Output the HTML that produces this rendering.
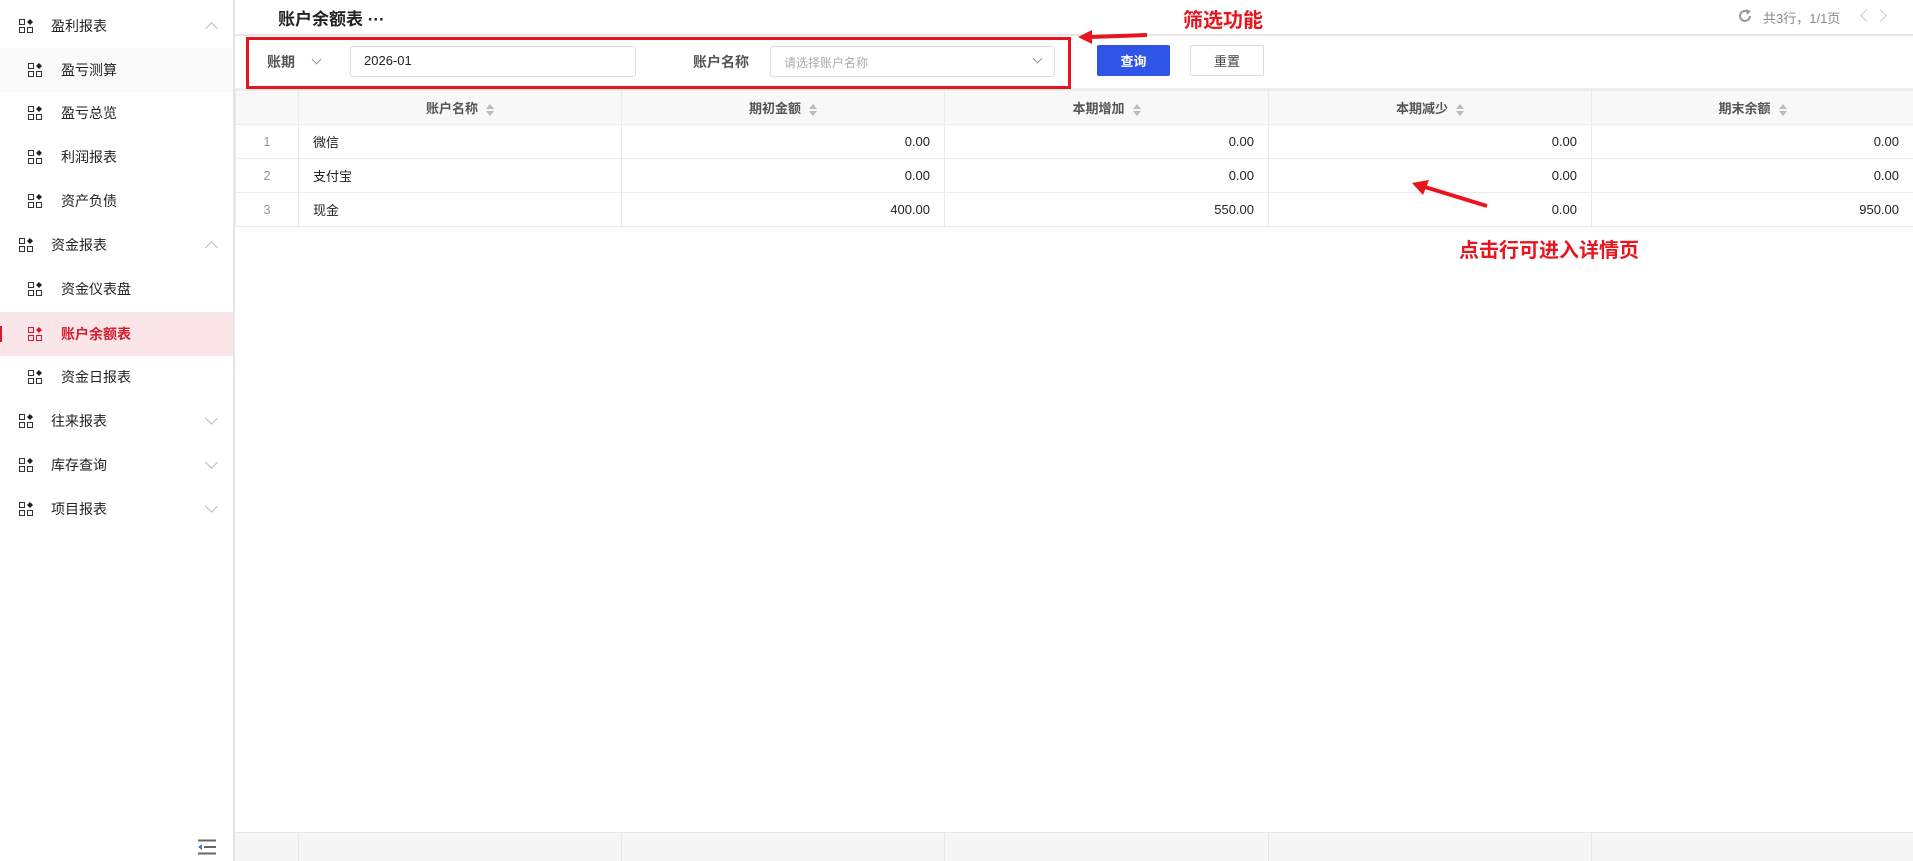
<!DOCTYPE html>
<html><head><meta charset="utf-8"><style>
*{box-sizing:border-box;margin:0;padding:0}
body{width:1913px;height:861px;overflow:hidden;background:#fff;font-family:"Liberation Sans","Noto Sans CJK SC",sans-serif;font-size:14px;color:#333;position:relative}
.abs{position:absolute}
.side{left:0;top:0;width:235px;height:861px;border-right:2px solid #e4e4e4;background:#fff}
.mi{position:absolute;left:0;width:233px;height:44px;display:flex;align-items:center;font-size:14px;color:#222}
.mi .ic{position:absolute;width:15px;height:15px}
.mi .tx{position:absolute}
.mi .ch{position:absolute;left:207px;width:9px;height:9px;border-left:1.5px solid #bbb;border-top:1.5px solid #bbb}
.up{transform:rotate(45deg);margin-top:5px}
.dn{transform:rotate(225deg);margin-top:-5px}
.hd{left:235px;top:0;right:0;height:36px;border-bottom:2px solid #e6e6e6}
.btn{position:absolute;height:31px;top:45px;display:flex;align-items:center;justify-content:center;font-size:13px;border-radius:2px}
table{position:absolute;left:235px;top:90px;width:1678px;border-collapse:collapse;table-layout:fixed}
td,th{border:1px solid #ebebeb;height:34px;font-size:13px;padding:0 14px}
th{background:#f8f8f8;font-weight:bold;color:#555;text-align:center}
td{text-align:right;color:#222}
td.n{text-align:center;color:#999}
td.l{text-align:left}
.sort{display:inline-block;vertical-align:middle;margin-left:8px;width:8px;height:12px;position:relative}
.sort:before{content:"";position:absolute;left:0;top:0;border:4px solid transparent;border-bottom:5px solid #bbb;border-top:0}
.sort:after{content:"";position:absolute;left:0;bottom:0;border:4px solid transparent;border-top:5px solid #bbb;border-bottom:0}
.red{color:#e8141e;font-weight:bold;font-size:20px}
</style></head><body>
<div class="abs side"></div>
<svg width="0" height="0" style="position:absolute"><defs>
<g id="ico"><rect x="0.5" y="0.5" width="5" height="5" fill="none" stroke="#333"/><rect x="0.5" y="8.5" width="5" height="5" fill="none" stroke="#333"/><rect x="8.5" y="8.5" width="5" height="5" fill="none" stroke="#333"/><path d="M11 0 L14 3 L11 6 L8 3Z" fill="#222"/></g>
<g id="icr"><rect x="0.5" y="0.5" width="5" height="5" fill="none" stroke="#e0142a"/><rect x="0.5" y="8.5" width="5" height="5" fill="none" stroke="#e0142a"/><rect x="8.5" y="8.5" width="5" height="5" fill="none" stroke="#e0142a"/><path d="M11 0 L14 3 L11 6 L8 3Z" fill="#e0142a"/></g>
</defs></svg>

<div class="mi" style="top:4px"><svg class="ic" style="left:19px" viewBox="0 0 15 15"><use href="#ico"/></svg><span class="tx" style="left:51px">盈利报表</span><span class="ch up"></span></div>
<div class="mi" style="top:48px;background:#fafafa"><svg class="ic" style="left:28px" viewBox="0 0 15 15"><use href="#ico"/></svg><span class="tx" style="left:61px">盈亏测算</span></div>
<div class="mi" style="top:91px"><svg class="ic" style="left:28px" viewBox="0 0 15 15"><use href="#ico"/></svg><span class="tx" style="left:61px">盈亏总览</span></div>
<div class="mi" style="top:135px"><svg class="ic" style="left:28px" viewBox="0 0 15 15"><use href="#ico"/></svg><span class="tx" style="left:61px">利润报表</span></div>
<div class="mi" style="top:179px"><svg class="ic" style="left:28px" viewBox="0 0 15 15"><use href="#ico"/></svg><span class="tx" style="left:61px">资产负债</span></div>
<div class="mi" style="top:223px"><svg class="ic" style="left:19px" viewBox="0 0 15 15"><use href="#ico"/></svg><span class="tx" style="left:51px">资金报表</span><span class="ch up"></span></div>
<div class="mi" style="top:267px"><svg class="ic" style="left:28px" viewBox="0 0 15 15"><use href="#ico"/></svg><span class="tx" style="left:61px">资金仪表盘</span></div>
<div class="mi" style="top:312px;background:#fae6e8;color:#d81b2b;font-weight:bold"><div style="position:absolute;left:0;top:14px;width:2px;height:16px;background:#d81b2b"></div><svg class="ic" style="left:28px" viewBox="0 0 15 15"><use href="#icr"/></svg><span class="tx" style="left:61px">账户余额表</span></div>
<div class="mi" style="top:355px"><svg class="ic" style="left:28px" viewBox="0 0 15 15"><use href="#ico"/></svg><span class="tx" style="left:61px">资金日报表</span></div>
<div class="mi" style="top:399px"><svg class="ic" style="left:19px" viewBox="0 0 15 15"><use href="#ico"/></svg><span class="tx" style="left:51px">往来报表</span><span class="ch dn"></span></div>
<div class="mi" style="top:443px"><svg class="ic" style="left:19px" viewBox="0 0 15 15"><use href="#ico"/></svg><span class="tx" style="left:51px">库存查询</span><span class="ch dn"></span></div>
<div class="mi" style="top:487px"><svg class="ic" style="left:19px" viewBox="0 0 15 15"><use href="#ico"/></svg><span class="tx" style="left:51px">项目报表</span><span class="ch dn"></span></div>
<svg class="abs" style="left:197px;top:839px" width="20" height="16" viewBox="0 0 20 16"><path d="M1 1.5H19M7 8H19M1 14.5H19" stroke="#666" stroke-width="2"/><path d="M1 8L5 5V11Z" fill="#4a7bd0"/></svg>

<div class="abs hd"></div>
<div class="abs" style="left:278px;top:5px;font-size:17px;font-weight:bold;color:#222">账户余额表 ···</div>
<svg class="abs" style="left:1737px;top:8px" width="16" height="16" viewBox="0 0 16 16"><path d="M13 8A5 5 0 1 1 11 4" fill="none" stroke="#999" stroke-width="2"/><path d="M9 1L14 3L10 7Z" fill="#999"/></svg>
<div class="abs" style="left:1763px;top:8px;font-size:13px;color:#888">共3行，1/1页</div>
<div class="abs" style="left:1862px;top:11px;width:9px;height:9px;border-left:1.3px solid #ccc;border-bottom:1.3px solid #ccc;transform:rotate(45deg)"></div>
<div class="abs" style="left:1876px;top:11px;width:9px;height:9px;border-right:1.3px solid #ccc;border-top:1.3px solid #ccc;transform:rotate(45deg)"></div>

<div class="abs red" style="left:1183px;top:4px">筛选功能</div>
<svg class="abs" style="left:1070px;top:25px" width="90" height="22"><path d="M1147 10L1090 12" transform="translate(-1070,0)" stroke="#e8141e" stroke-width="4"/><path d="M8 12L22 5L22 19Z" fill="#e8141e"/></svg>

<div class="abs" style="left:235px;top:88px;right:0;height:2px;background:#eee"></div>
<div class="abs" style="left:246px;top:37px;width:825px;height:52px;border:3px solid #e8141e"></div>
<div class="abs" style="left:267px;top:52px;font-size:14px;color:#555;font-weight:bold">账期</div>
<div class="abs" style="left:313px;top:56px;width:7px;height:7px;border-right:1px solid #999;border-bottom:1px solid #999;transform:rotate(45deg)"></div>
<div class="abs" style="left:350px;top:46px;width:286px;height:31px;border:1px solid #ddd;border-radius:3px;padding:6px 13px;font-size:13px;color:#222">2026-01</div>
<div class="abs" style="left:693px;top:52px;font-size:14px;color:#555;font-weight:bold">账户名称</div>
<div class="abs" style="left:770px;top:46px;width:285px;height:31px;border:1px solid #ddd;border-radius:3px;padding:7px 13px;font-size:12px;color:#aaa">请选择账户名称</div>
<div class="abs" style="left:1034px;top:55px;width:7px;height:7px;border-right:1px solid #999;border-bottom:1px solid #999;transform:rotate(45deg)"></div>
<div class="btn" style="left:1097px;width:73px;background:#2f55e8;color:#fff;font-weight:bold">查询</div>
<div class="btn" style="left:1190px;width:74px;border:1px solid #ddd;color:#444">重置</div>

<table>
<colgroup><col style="width:63px"><col style="width:323px"><col style="width:323px"><col style="width:324px"><col style="width:323px"><col style="width:322px"></colgroup>
<tr><th></th><th>账户名称<span class="sort"></span></th><th>期初金额<span class="sort"></span></th><th>本期增加<span class="sort"></span></th><th>本期减少<span class="sort"></span></th><th>期末余额<span class="sort"></span></th></tr>
<tr><td class="n">1</td><td class="l">微信</td><td>0.00</td><td>0.00</td><td>0.00</td><td>0.00</td></tr>
<tr><td class="n">2</td><td class="l">支付宝</td><td>0.00</td><td>0.00</td><td>0.00</td><td>0.00</td></tr>
<tr><td class="n">3</td><td class="l">现金</td><td>400.00</td><td>550.00</td><td>0.00</td><td>950.00</td></tr>
</table>

<svg class="abs" style="left:1405px;top:175px" width="90" height="40"><path d="M82 31L20 12" stroke="#e8141e" stroke-width="4"/><path d="M7 8L24 5L18 20Z" fill="#e8141e"/></svg>
<div class="abs red" style="left:1459px;top:234px">点击行可进入详情页</div>

<div class="abs" style="left:235px;top:832px;width:1678px;height:29px;background:#f5f5f5;border-top:1px solid #e8e8e8"></div>
<div class="abs" style="left:298px;top:832px;width:1px;height:29px;background:#e6e6e6"></div>
<div class="abs" style="left:621px;top:832px;width:1px;height:29px;background:#e6e6e6"></div>
<div class="abs" style="left:944px;top:832px;width:1px;height:29px;background:#e6e6e6"></div>
<div class="abs" style="left:1268px;top:832px;width:1px;height:29px;background:#e6e6e6"></div>
<div class="abs" style="left:1591px;top:832px;width:1px;height:29px;background:#e6e6e6"></div>
</body></html>
